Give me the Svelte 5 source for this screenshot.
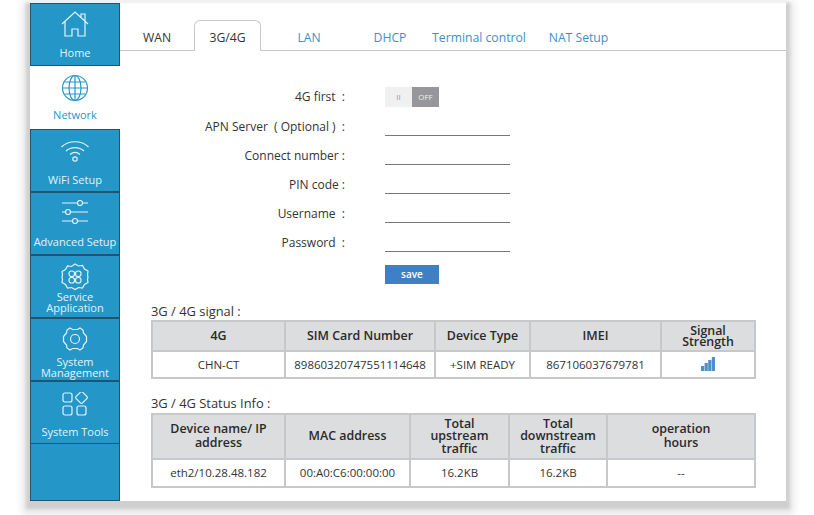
<script>
  const tabs = [
    { name: 'WAN', state: 'plain' },
    { name: '3G/4G', state: 'active' },
    { name: 'LAN' },
    { name: 'DHCP' },
    { name: 'Terminal control' },
    { name: 'NAT Setup' }
  ];
  const fields = ['APN Server  ( Optional )  :', 'Connect number :', 'PIN code :', 'Username  :', 'Password  :'];
</script>

<div class="page">
  <div class="window">
    <nav class="side">
      <a class="item home">
        <svg viewBox="0 0 28 26" width="28" height="26"><path d="M1 13 14 1l13 12M4 10.500V25h7v-7h6v7h7V10.500M20 6V3h4v7" /></svg>
        <span>Home</span>
      </a>
      <a class="item on">
        <svg viewBox="0 0 28 28" width="28" height="28"><circle cx="14" cy="14" r="12.500" /><ellipse cx="14" cy="14" rx="6" ry="12.500" /><path d="M14 1.500v25M1.500 14h25M3.500 8h21M3.500 20h21" /></svg>
        <span>Network</span>
      </a>
      <a class="item wifi">
        <svg viewBox="0 0 30 24" width="30" height="24"><path d="M1.500 8C9 1 21 1 28.500 8M6 12c5-4.500 13-4.500 18 0M10 15.500c3-2.500 7-2.500 10 0" /><circle cx="15" cy="20" r="2.200" /></svg>
        <span>WiFi Setup</span>
      </a>
      <a class="item adv">
        <svg viewBox="0 0 28 24" width="28" height="24"><path d="M1 3h15M22 3h5M1 12h3M10 12h17M1 21h10M17 21h10" /><circle cx="19" cy="3" r="2.500" /><circle cx="7" cy="12" r="2.500" /><circle cx="14" cy="21" r="2.500" /></svg>
        <span>Advanced Setup</span>
      </a>
      <a class="item tight">
        <svg viewBox="0 0 28 28" width="28" height="28"><path d="M14 1l3.500 2 4-.500 2 3.500 3.500 2-.500 4L27 14l-.500 2.500.500 3-3.500 2-2 3.500-4-.500-3.500 2-3.500-2-4 .500-2-3.500-3.500-2 .500-3L1 14l.500-2.500-.500-3 3.500-2 2-3.500 4 .500z" /><rect x="8" y="8" width="5.500" height="5.500" rx="2.500" /><rect x="14.500" y="8" width="5.500" height="5.500" rx="2.500" /><rect x="8" y="14.500" width="5.500" height="5.500" rx="2.500" /><rect x="14.500" y="14.500" width="5.500" height="5.500" rx="2.500" /></svg>
        <span>Service<br />Application</span>
      </a>
      <a class="item tight low">
        <svg viewBox="0 0 26 26" width="26" height="26"><path d="M8 2l2.500 1.500h5L18 2l3 2 .500 3 3 3.500v5l-3 3.500-.500 3-3 2-2.500-1.500h-5L8 24l-3-2-.500-3-3-3.500v-5l3-3.500.500-3z" /><circle cx="13" cy="13" r="4.500" /></svg>
        <span>System<br />Management</span>
      </a>
      <a class="item tools">
        <svg viewBox="0 0 26 24" width="26" height="24"><rect x="1" y="1" width="9" height="9" rx="2" /><rect x="15" y="1" width="9" height="9" rx="1.500" transform="rotate(45 19.500 5.500)" /><rect x="1" y="14" width="9" height="9" rx="2" /><rect x="15" y="14" width="9" height="9" rx="2" /></svg>
        <span>System Tools</span>
      </a>
      <div class="rest"></div>
    </nav>

    <main>
      <div class="tabs">
        {#each tabs as t}
          <a class="tab {t.state || ''}">{t.name}</a>
        {/each}
      </div>

      <section class="form">
        <div class="row first">
          <label>4G first  :</label>
          <div class="switch"><span class="ii">II</span><span class="off">OFF</span></div>
        </div>
        {#each fields as f}
          <div class="row">
            <label>{f}</label>
            <div class="line"></div>
          </div>
        {/each}
        <button class="save">save</button>
      </section>

      <h3 class="first">3G / 4G signal :</h3>
      <table class="signal">
        <colgroup><col class="a" /><col class="b" /><col class="c" /><col class="d" /><col /></colgroup>
        <thead>
          <tr><th>4G</th><th>SIM Card Number</th><th>Device Type</th><th>IMEI</th><th class="pack">Signal<br />Strength</th></tr>
        </thead>
        <tbody>
          <tr>
            <td>CHN-CT</td><td>89860320747551114648</td><td>+SIM READY</td><td>867106037679781</td>
            <td>
              <svg class="bars" viewBox="0 0 14 14" width="14" height="14">
                <rect x="0" y="9" width="3.200" height="5" /><rect x="3.600" y="6" width="3.200" height="8" /><rect x="7.200" y="3" width="3.200" height="11" /><rect x="10.800" y="0" width="3.200" height="14" />
              </svg>
            </td>
          </tr>
        </tbody>
      </table>

      <h3 class="second">3G / 4G Status Info :</h3>
      <table class="status">
        <colgroup><col class="a" /><col class="b" /><col class="c" /><col class="d" /><col /></colgroup>
        <thead>
          <tr><th>Device name/ IP<br />address</th><th>MAC address</th><th class="pack">Total<br />upstream<br />traffic</th><th class="pack">Total<br />downstream<br />traffic</th><th>operation<br />hours</th></tr>
        </thead>
        <tbody>
          <tr><td>eth2/10.28.48.182</td><td>00:A0:C6:00:00:00</td><td>16.2KB</td><td>16.2KB</td><td>--</td></tr>
        </tbody>
      </table>
    </main>
  </div>
</div>

<style>
  :global(body) {
    margin: 0;
    background: #fff;
  }

  .page {
    box-sizing: border-box;
    height: 515px;
    padding: 3px 0 0 30px;
    overflow: hidden;
  }

  .window {
    display: flex;
    width: 756px;
    height: 498px;
    background: #fff;
    box-shadow: 0 -3px 0 0 #f0f0f0, 0 4px 3px 4px #cfcfcf, 0 6px 8px 8px #e8e8e8;
    font-family: 'Open Sans', 'Noto Sans', sans-serif;
    color: #333;
  }

  .side {
    display: flex;
    flex-direction: column;
    flex: none;
    box-sizing: border-box;
    width: 90px;
    background: #2497c8;
    border: 1px solid #21556f;
    border-width: 0 1px 1px 1px;
  }

  .item {
    display: flex;
    flex-direction: column;
    align-items: center;
    box-sizing: border-box;
    height: 63px;
    padding-top: 7px;
    border-top: 1px solid #21556f;
    border-bottom: 1px solid #21556f;
    color: #e3f3fa;
    font-size: 11px;
    line-height: 11px;
    text-align: center;
    white-space: nowrap;
  }

  .item span {
    margin-top: auto;
    padding-bottom: 6px;
  }

  .item.home span,
  .item.adv span {
    padding-bottom: 7px;
  }

  .item.tight span {
    padding-bottom: 4px;
  }

  .item.low span {
    padding-bottom: 2px;
  }

  .item.wifi {
    padding-top: 9px;
  }

  .item.tools {
    padding-top: 10px;
  }

  .item svg {
    flex: none;
    fill: none;
    stroke: #e3f3fa;
    stroke-width: 1.200;
  }

  .item.on {
    margin: 0 -1px;
    background: #fff;
    border: 0;
    color: #2497c8;
  }

  .item.on span {
    padding-bottom: 9px;
  }

  .item.on svg {
    stroke: #2497c8;
    margin-top: 1px;
  }

  .rest {
    flex: 1;
  }

  main {
    flex: 1;
    min-width: 0;
  }

  .tabs {
    display: flex;
    align-items: flex-end;
    height: 47px;
    border-bottom: 1px solid #c8c8c8;
    font-size: 12.200px;
  }

  .tab {
    box-sizing: border-box;
    height: 29px;
    padding-top: 10px;
    line-height: 14px;
    text-align: center;
    color: #3d8fcc;
    white-space: nowrap;
  }

  .tab:nth-child(1) { width: 74px; }
  .tab:nth-child(2) { width: 67px; }
  .tab:nth-child(3) { width: 96px; }
  .tab:nth-child(4) { width: 66px; }
  .tab:nth-child(5) { width: 112px; }
  .tab:nth-child(6) { width: 87px; }

  .tab.plain {
    color: #333;
  }

  .tab.active {
    height: 31px;
    margin-bottom: -1px;
    padding-top: 10px;
    background: #fff;
    color: #333;
    border: 1px solid #c8c8c8;
    border-bottom: 0;
    border-radius: 6px 6px 0 0;
  }

  .form {
    display: flex;
    flex-direction: column;
    padding-top: 36px;
  }

  .row {
    display: flex;
    align-items: flex-end;
    height: 29.100px;
    font-size: 12px;
  }

  .row.first {
    align-items: center;
    height: 20px;
  }

  label {
    width: 225px;
    padding-bottom: 1px;
    text-align: right;
    white-space: pre;
  }

  .line {
    width: 125px;
    height: 10px;
    margin-left: 40px;
    border-bottom: 1px solid #777;
  }

  .switch {
    display: flex;
    width: 54px;
    height: 20px;
    margin-left: 40px;
    font-size: 8px;
    line-height: 20px;
    text-align: center;
  }

  .switch span {
    flex: 1;
  }

  .ii {
    background: #f0f0f0;
    color: #999;
  }

  .off {
    background: #97979b;
    color: #eee;
  }

  .save {
    align-self: flex-start;
    width: 54px;
    height: 19px;
    margin: 12.500px 0 0 265px;
    padding: 0;
    border: 0;
    background: #3f80c4;
    color: #fff;
    font: 600 10px 'Open Sans', sans-serif;
  }

  h3 {
    margin: 0 0 0 31px;
    font-size: 12.900px;
    font-weight: 400;
    line-height: 16px;
  }

  h3.first {
    margin-top: 19px;
  }

  h3.second {
    margin-top: 16px;
  }

  table {
    width: 605px;
    margin: 1px 0 0 31px;
    border-collapse: collapse;
    table-layout: fixed;
    font-size: 11.500px;
  }

  .status {
    margin-top: 2px;
  }

  .signal .a { width: 133px; }
  .signal .b { width: 150px; }
  .signal .c { width: 95px; }
  .signal .d { width: 131px; }

  .status .a { width: 133px; }
  .status .b { width: 125px; }
  .status .c { width: 99px; }
  .status .d { width: 98px; }

  th, td {
    padding: 0;
    border: 2px solid #c6c8ca;
    text-align: center;
    white-space: nowrap;
  }

  th {
    background: #dcddde;
    color: #2a2a2a;
    font-size: 12.400px;
    font-weight: 600;
    line-height: 14px;
  }

  th.pack {
    line-height: 11px;
  }

  .status th.pack {
    line-height: 12.500px;
  }

  td {
    height: 25px;
    color: #333;
  }

  .status td {
    height: 26px;
  }

  .signal th {
    height: 28px;
  }

  .status th {
    height: 43px;
  }

  .bars {
    display: block;
    margin: 0 auto;
    fill: #4f90c8;
  }
</style>
